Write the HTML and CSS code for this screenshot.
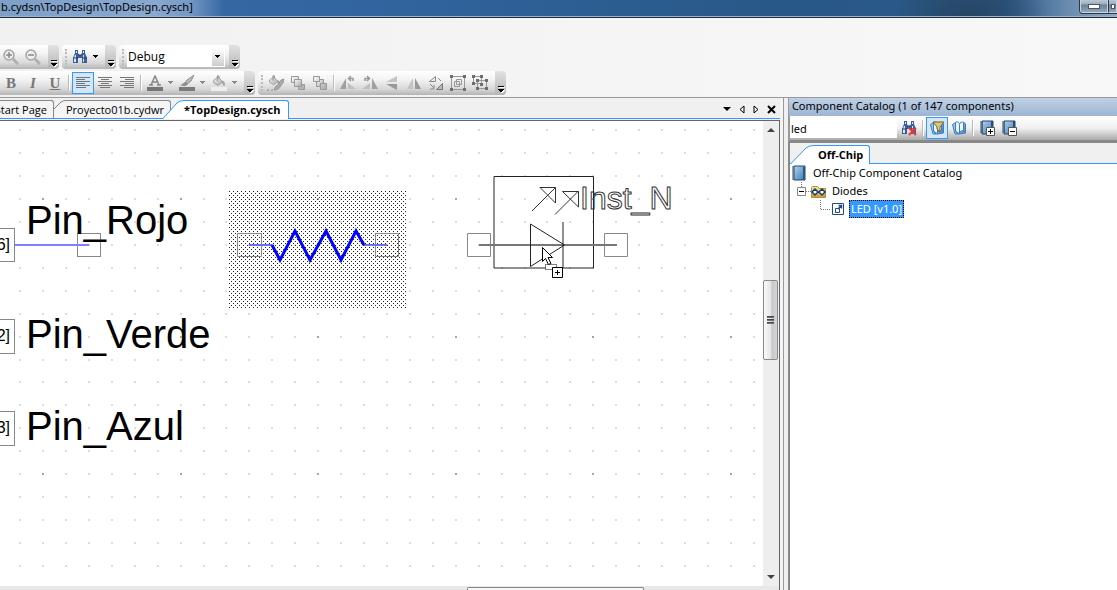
FILE: index.html
```html
<!DOCTYPE html>
<html lang="en">
<head>
<meta charset="utf-8">
<title>TopDesign.cysch</title>
<link rel="stylesheet" href="styles.css">
</head>
<body>
<svg class="defs" aria-hidden="true">
  <defs>
    <linearGradient id="blue" x1="0" y1="0" x2="1" y2="1"><stop offset="0" stop-color="#b5d3ee"/><stop offset="1" stop-color="#3a78b5"/></linearGradient>
    <linearGradient id="grey" x1="0" y1="0" x2="1" y2="1"><stop offset="0" stop-color="#fafafa"/><stop offset="1" stop-color="#a6a6a6"/></linearGradient>
    <linearGradient id="gold" x1="0" y1="0" x2="0" y2="1"><stop offset="0" stop-color="#f7e3a0"/><stop offset="1" stop-color="#c69a35"/></linearGradient>
    <pattern id="dither" x="229" y="191" width="4" height="4" patternUnits="userSpaceOnUse">
      <path d="M0 0h1v1H0zM2 2h1v1H2z" fill="#222" shape-rendering="crispEdges"/>
    </pattern>
    <symbol id="more" viewBox="0 0 8 8"><path d="M2 2h6v1H2zM2 5h6v1H7v1H6v1H4V7H3V6H2z" fill="#fff"/><path d="M1 1h6v1H1zM1 4h6v1H6v1H5v1H3V6H2V5H1z" fill="#000"/></symbol>
    <symbol id="drop" viewBox="0 0 6 4"><path d="M0 0h5v1H4v1H3v1H2V2H1V1H0z"/></symbol>
    <symbol id="binoc" viewBox="0 0 16 16">
      <path d="M3 1h3v3l1 2h2l1-2V1h3v3l2 5v5h-5V9H6v5H1V9l2-5z" fill="#3c5f9c"/>
      <path d="M3 6h1v7H2V9zM11 6h1v7h-1zM4 2h1v2H4zM11 2h1v2h-1z" fill="#dbe8f7"/>
      <path d="M6 6h4M1 9h5M10 9h5" stroke="#203a6c"/>
    </symbol>
    <symbol id="book" viewBox="0 0 16 16"><path d="M1.500 4.500l3-2v9l3 2.500H4z" fill="#9cc4e8" stroke="#3b7fc0"/><path d="M4.500 11V3c1-2 4-1 4 1v10z" fill="#eaf4fc" stroke="#3b7fc0"/><path d="M8.500 14V5l4-3 2 2v9z" fill="url(#blue)" stroke="#3b7fc0"/><path d="M8.500 12V4.500c0-2 3-3 4-2V10z" fill="#f4f9fd" stroke="#3b7fc0"/></symbol>
    <symbol id="notebook" viewBox="0 0 16 16"><path d="M3 1h11v13H3z" fill="url(#blue)" stroke="#23466e"/><path d="M12 1h2v13h-2z" fill="#294e79"/><path d="M1 2h3M1 4h3M1 6h3M1 8h3M1 10h3M1 12h3" stroke="#354b62"/></symbol>
    <symbol id="bucket" viewBox="0 0 16 16"><path d="M2 6l5-4 5 6-5 4-5-3z" fill="url(#grey)" stroke="#969696"/><path d="M6 7V1h2v3M12 7c3 1 2 3 2 5-2-1-2-3-2-5z" fill="#bbb" stroke="#909090"/></symbol>
  </defs>
</svg>

<header class="titlebar">
  <span class="title">b.cydsn\TopDesign\TopDesign.cysch]</span>
  <div class="winbuttons">
    <button class="winbtn" aria-label="Minimize"><span class="mini"></span></button>
    <button class="winbtn next" aria-label="Maximize"><span class="mini"></span></button>
  </div>
</header>

<section class="toolbars">
  <div class="row">
    <div class="bar first">
      <button class="tool" aria-label="Zoom in"><svg width="16" height="16"><circle cx="6" cy="6" r="5" fill="#eee" stroke="#a5a5a5" stroke-width="1.5"/><path d="M3 6h6M6 3v6" stroke="#888" stroke-width="1.5"/><path d="M10 10l5 5" stroke="#b0b0b0" stroke-width="3"/></svg></button>
      <button class="tool" aria-label="Zoom out"><svg width="16" height="16"><circle cx="6" cy="6" r="5" fill="#eee" stroke="#a5a5a5" stroke-width="1.5"/><path d="M3 6h6" stroke="#888" stroke-width="1.5"/><path d="M10 10l5 5" stroke="#b0b0b0" stroke-width="3"/></svg></button>
      <button class="cap" aria-label="More zoom tools"><svg width="8" height="8"><use href="#more"/></svg></button>
    </div>
    <div class="bar">
      <span class="grip"></span>
      <button class="tool" aria-label="Find"><svg width="16" height="16"><use href="#binoc"/></svg></button>
      <button class="arrow" aria-label="Find options"><svg width="6" height="4"><use href="#drop"/></svg></button>
      <button class="cap" aria-label="More find tools"><svg width="8" height="8"><use href="#more"/></svg></button>
    </div>
    <div class="bar">
      <span class="grip"></span>
      <div class="combo">
        <select aria-label="Configuration"><option>Debug</option><option>Release</option></select>
        <span class="combo-arrow"><svg width="6" height="4"><use href="#drop"/></svg></span>
      </div>
      <button class="cap" aria-label="More build tools"><svg width="8" height="8"><use href="#more"/></svg></button>
    </div>
  </div>
  <div class="row">
    <div class="bar first">
      <button class="tool letter"><b>B</b></button>
      <button class="tool letter"><i>I</i></button>
      <button class="tool letter"><u>U</u></button>
      <span class="sep"></span>
      <button class="tool on" aria-label="Align left"><svg width="16" height="14"><path d="M1 1.500h14M1 3.500h9M1 5.500h14M1 7.500h9M1 9.500h14M1 11.500h10" stroke="#6d7680"/></svg></button>
      <button class="tool" aria-label="Align center"><svg width="16" height="14"><path d="M1 1.500h14M4 3.500h8M1 5.500h14M4 7.500h8M1 9.500h14M3 11.500h10" stroke="#777"/></svg></button>
      <button class="tool" aria-label="Align right"><svg width="16" height="14"><path d="M1 1.500h14M6 3.500h9M1 5.500h14M6 7.500h9M1 9.500h14M5 11.500h10" stroke="#777"/></svg></button>
      <span class="sep"></span>
      <button class="tool" aria-label="Text color"><svg width="16" height="16"><path d="M2 10h4M10 10h4M4 10L8 1l4 9M5 7h6" stroke="#888" stroke-width="1.500" fill="none"/><path d="M0 12h16v4H0z" fill="#757575"/></svg></button>
      <button class="arrow dim" aria-label="Text color options"><svg width="6" height="4"><use href="#drop"/></svg></button>
      <button class="tool" aria-label="Line color"><svg width="16" height="16"><path d="M15 0l-3 6-4 3-2-1 2-3z" fill="#bbb" stroke="#8f8f8f"/><path d="M7 7c-3 0-3 3-6 3 3 2 7 1 8-1z" fill="#8d8d8d"/><path d="M0 12h16v4H0z" fill="#7a7a7a"/></svg></button>
      <button class="arrow dim" aria-label="Line color options"><svg width="6" height="4"><use href="#drop"/></svg></button>
      <button class="tool" aria-label="Fill color"><svg width="16" height="16"><path d="M0 12h16v4H0z" fill="#eee"/><use href="#bucket" width="16" height="14"/></svg></button>
      <button class="arrow dim" aria-label="Fill color options"><svg width="6" height="4"><use href="#drop"/></svg></button>
      <button class="cap" aria-label="More format tools"><svg width="8" height="8"><use href="#more"/></svg></button>
    </div>
    <div class="bar">
      <span class="grip"></span>
      <button class="tool" aria-label="Format shape"><svg width="18" height="16"><use href="#bucket" width="15" height="13"/><path d="M7 15c1-3 2-5 4-5l3-5 3-1-1 4-3 4c-1 2-3 3-6 3z" fill="#aaa" stroke="#888" stroke-width=".7"/><path d="M0 15h2M4 15h2" stroke="#888"/></svg></button>
      <button class="tool" aria-label="Bring to front"><svg width="16" height="16"><g fill="url(#grey)" stroke="#999"><path d="M1.500 1.500h7v6h-7zM8.500 9.500h6v5h-6z"/><path d="M4.500 4.500h7v7h-7z"/></g></svg></button>
      <button class="tool" aria-label="Send to back"><svg width="16" height="16"><g fill="url(#grey)" stroke="#999"><path d="M4.500 4.500h7v7h-7z"/><path d="M1.500 1.500h6v5h-6zM8.500 8.500h6v6h-6z"/></g></svg></button>
      <span class="sep"></span>
      <button class="tool" aria-label="Rotate left"><svg width="16" height="16"><path d="M0 14L6 3v11z" fill="#a0a0a0"/><path d="M8 14V8l8 6z" fill="#c0c0c0"/><path d="M13 6V3.500H9M11 1L8.500 3.500 11 6" fill="none" stroke="#999" stroke-width="1.500"/></svg></button>
      <button class="tool" aria-label="Rotate right"><svg width="16" height="16"><path d="M16 14L10 3v11z" fill="#a0a0a0"/><path d="M8 14V8l-8 6z" fill="#c0c0c0"/><path d="M3 6V3.500h4M5 1l2.500 2.500L5 6" fill="none" stroke="#999" stroke-width="1.500"/></svg></button>
      <button class="tool" aria-label="Flip vertical"><svg width="16" height="16"><path d="M2 7L13 1v6z" fill="#c4c4c4"/><path d="M2 9h11v6z" fill="#999"/></svg></button>
      <button class="tool" aria-label="Flip horizontal"><svg width="16" height="16"><path d="M1 14L7 3v11z" fill="#c4c4c4"/><path d="M9 3l6 11H9z" fill="#999"/></svg></button>
      <button class="tool" aria-label="Mirror diagonal"><svg width="16" height="16"><path d="M1.500 6.500l6-5v5z" fill="#eee" stroke="#888"/><path d="M8.500 14.500l6-6v6z" fill="#bbb" stroke="#777"/><path d="M2 9l4 4M6 10v4H2M10 3l3 3" fill="none" stroke="#888"/></svg></button>
      <button class="tool" aria-label="Group"><svg width="16" height="16"><path d="M1.500 1.500h13v13h-13zM4.500 6.500h5v5h-5zM6.500 4.500h5v5h-5z" fill="none" stroke="#999"/><path d="M0 0h3v3H0zM13 0h3v3h-3zM0 13h3v3H0zM13 13h3v3h-3z" fill="#6e6e6e"/></svg></button>
      <button class="tool" aria-label="Ungroup"><svg width="16" height="16"><path d="M1.500 1.500h8v7h-8zM5.500 5.500h9v8h-9z" fill="none" stroke="#999"/><path d="M0 0h3v3H0zM8 0h3v3H8zM0 7h3v3H0zM8 8h3v3H8zM4 4h3v3H4zM13 4h3v3h-3zM4 12h3v3H4zM13 12h3v3h-3z" fill="#6e6e6e"/></svg></button>
      <button class="cap" aria-label="More shape tools"><svg width="8" height="8"><use href="#more"/></svg></button>
    </div>
  </div>
</section>

<main class="work">
  <section class="document">
    <nav class="tabs">
      <button class="tab start"><span class="tab-label">Start Page</span></button>
      <button class="tab"><svg class="slant" width="12" height="18"><path d="M0 18V12L9 2Q11 .5 12 .5V18z" fill="#f5f5f5"/><path d="M0 9L7 2Q9 .5 12 .5" fill="none" stroke="#888"/></svg><span class="tab-label">Proyecto01b.cydwr</span></button>
      <button class="tab current"><svg class="slant" width="21" height="19"><path d="M0 19L14 3Q17 .5 21 .5V19z" fill="#fff"/><path d="M0 18.500L14 3Q17 .5 21 .5" fill="none" stroke="#39f"/></svg><span class="tab-label">*TopDesign.cysch</span></button>
      <div class="tab-tools">
        <button aria-label="Tab list"><svg width="8" height="5"><path d="M0 0h8L4 4z"/></svg></button>
        <button aria-label="Previous tab"><svg width="6" height="9"><path d="M5 1v7L1 4.500z" fill="none" stroke="#000"/></svg></button>
        <button aria-label="Next tab"><svg width="6" height="9"><path d="M1 1v7l4-3.500z" fill="none" stroke="#000"/></svg></button>
        <button aria-label="Close tab"><svg width="9" height="9"><path d="M1 1l7 7M8 1L1 8" stroke="#000" stroke-width="2"/></svg></button>
      </div>
    </nav>
    <div class="canvas-area">
      <svg class="canvas" role="img" aria-label="Schematic">
        <g transform="translate(0 -121)">
          <g id="dots" shape-rendering="crispEdges"></g>
          <g fill="none" stroke="#888"><rect x="-30.500" y="228.500" width="45" height="33"/><rect x="-30.500" y="319.500" width="45" height="34"/><rect x="-30.500" y="411.500" width="45" height="34"/><rect x="77.500" y="233.500" width="23" height="23"/></g>
          <g class="port"><text x="10" y="250" text-anchor="end">6]</text><text x="10" y="341" text-anchor="end">2]</text><text x="10" y="433" text-anchor="end">3]</text></g>
          <path d="M15 245h74" stroke="#8080ff" stroke-width="2"/>
          <g class="pin"><text x="26" y="234">Pin_Rojo</text><text x="26" y="348">Pin_Verde</text><text x="26" y="440">Pin_Azul</text></g>
          <rect x="229" y="191" width="178" height="117" fill="url(#dither)"/>
          <path d="M237.500 233.500h24v23h-24zM375.500 233.500h23v23h-23z" fill="none" stroke="#888"/>
          <path d="M249 245h23M364 245h23" stroke="#6e6ef5" stroke-width="2"/>
          <path d="M272 245l8 15 15-29 15 29 16-29 15 29 15-29 8 14" fill="none" stroke="#00f" stroke-width="3"/>
          <path d="M494 176.500h99.500v91.500H494z" fill="none" stroke="#222"/>
          <path d="M467.500 233.500h23v23h-23zM604.500 233.500h23v23h-23z" fill="none" stroke="#888"/>
          <path d="M479 245h138" stroke="#777" stroke-width="2"/>
          <path d="M530.500 224v42.500L564.500 245zM563 222v46" fill="none" stroke="#222"/>
          <path d="M532 211l23.500-23.500M540 187.500h15.500V203zM555 214.500l23.500-23.500M562.500 191.500h16V207z" fill="none" stroke="#333"/>
          <text class="instance" x="580" y="209">Inst_N</text>
          <path d="M545.500 264.500h11v5h-11z" fill="#fff" stroke="#000" stroke-dasharray="1 1"/>
          <path d="M542.500 247.500v14l3-3 3 6 2.500-1-3-6h4.500z" fill="#fff" stroke="#000"/>
          <path d="M552.500 267.500h10v10h-10z" fill="#fff" stroke="#000"/><path d="M555 272.500h5M557.500 270v5" stroke="#000"/>
        </g>
      </svg>
      <div class="vscroll">
        <svg width="8" height="5"><path d="M0 5h8L4 1z" fill="#444"/></svg>
        <div class="vtrack"><div class="vthumb"><span></span><span></span><span></span></div></div>
        <svg width="8" height="5"><path d="M0 0h8L4 4z" fill="#444"/></svg>
      </div>
    </div>
    <div class="hscroll"><div class="hthumb"></div></div>
  </section>

  <aside class="catalog">
    <h2>Component Catalog (1 of 147 components)</h2>
    <div class="catalog-tools">
      <input type="text" value="led" aria-label="Search components">
      <button class="tool" aria-label="Clear search"><svg width="16" height="16"><use href="#binoc"/><path d="M8 8l7 7M15 8l-7 7" stroke="#e33" stroke-width="2"/></svg></button>
      <span class="sep"></span>
      <button class="tool on" aria-label="Filter catalog"><svg width="16" height="16"><use href="#book"/><path d="M4 2h11l-4 5v5l-3-3V7z" fill="#d9c979" stroke="#77642a"/></svg></button>
      <button class="tool" aria-label="Open catalog"><svg width="16" height="16"><use href="#book"/></svg></button>
      <span class="sep"></span>
      <button class="tool" aria-label="Expand all"><svg width="16" height="16"><use href="#notebook"/><path d="M7.500 7.500h8v8h-8z" fill="#fff" stroke="#555"/><path d="M9 11.500h5M11.500 9v5" stroke="#000"/></svg></button>
      <button class="tool" aria-label="Collapse all"><svg width="16" height="16"><use href="#notebook"/><path d="M7.500 7.500h8v8h-8z" fill="#fff" stroke="#555"/><path d="M9 11.500h5" stroke="#000"/></svg></button>
    </div>
    <div class="catalog-body">
      <nav class="catalog-tabs"><button class="tab current"><svg class="slant" width="23" height="19"><path d="M0 19L15 3Q18 .5 23 .5V19z" fill="#fff"/><path d="M0 18.500L15 3Q18 .5 23 .5" fill="none" stroke="#39f"/></svg><span class="tab-label">Off-Chip</span></button></nav>
      <ul class="tree">
        <li><svg width="16" height="16"><path d="M3 1h11v14H3z" fill="url(#blue)" stroke="#23466e"/><path d="M12 2h2v13h-2z" fill="#31577f"/><path d="M1 2h2M1 4h2M1 6h2M1 8h2M1 10h2M1 12h2M1 14h2" stroke="#354b62"/></svg><span>Off-Chip Component Catalog</span></li>
        <li class="level1"><svg width="30" height="18"><path d="M4.500 0v5M9 9.500h5" stroke="#777" stroke-dasharray="1 1"/><path d="M.5 5.500h8v8h-8z" fill="#fff" stroke="#888"/><path d="M2 9.500h5" stroke="#000"/><path d="M14.500 15.500v-10l1-1h5l2 2h6v9z" fill="url(#gold)" stroke="#b68c31"/><path d="M15 10l3-3 3 3-3 3zM22 10l3-3 3 3-3 3z" fill="#fff" stroke="#193d73" stroke-width="1.500"/></svg><span>Diodes</span></li>
        <li class="level2"><svg width="25" height="18"><path d="M.5 0v9.500H11" fill="none" stroke="#777" stroke-dasharray="1 1"/><path d="M12.500 3.500h11v11h-11z" fill="#fff" stroke="#234b85"/><path d="M15.500 8.500h4v4h-4z" fill="none" stroke="#234b85"/><path d="M18 9l4-4M18.500 5.500h3v3" fill="none" stroke="#234b85" stroke-width="1.500"/></svg><span class="selected">LED [v1.0]</span></li>
      </ul>
    </div>
  </aside>
</main>
<script src="grid.js"></script>
</body>
</html>
```

FILE: styles.css
```css
* { box-sizing: border-box; }
body { margin: 0; height: 100vh; display: flex; flex-direction: column; overflow: hidden; background: #f4f4f4; color: #000; font-family: "Open Sans", "Noto Sans", sans-serif; font-size: 11px; line-height: 16px; }
button { font: inherit; color: inherit; background: none; border: 0; padding: 0; display: flex; align-items: center; justify-content: center; }
svg { display: block; flex: none; }
.defs { position: absolute; width: 0; height: 0; }

.titlebar { flex: none; height: 18px; display: flex; justify-content: space-between; border-bottom: 1px solid #202c3b; box-shadow: inset 0 -1px #9db3c9; font-family: "Noto Sans", sans-serif; background: radial-gradient(circle at 970px 26px, #26435f 0, transparent 80px), linear-gradient(90deg, #7d9fc8 0, #88a8cf 14%, #7598c5 17%, #3568a3 20%, #3266a1 30%, #285887 70%, #2b5a8a 90%, #6d8eb0 96%, #91a9c2 100%); }
.title { line-height: 14px; padding-left: 1px; white-space: nowrap; }
.winbuttons { display: flex; height: 14px; border: 1px solid #2b3848; border-top: 0; border-right: 0; border-radius: 0 0 0 4px; overflow: hidden; }
.winbtn { width: 28px; align-items: flex-start; padding-top: 4px; background: linear-gradient(#bac8d5 0, #9aabbc 35%, #6b7f94 40%, #94a7b8 100%); border: 1px solid #c8d5e1; border-top: 0; }
.winbtn.next { width: 9px; border-left-color: #2b3848; }
.mini { width: 12px; height: 5px; background: #fff; border: 1px solid #4b5563; }
.next .mini { width: 4px; }

.toolbars { flex: none; padding-top: 27px; display: flex; flex-direction: column; gap: 1px; height: 79px; background: linear-gradient(90deg, #f1f1f1, #f8f8f8); }
.row { display: flex; gap: 3px; height: 25px; }
.bar { display: flex; align-items: center; height: 24px; border-radius: 4px; background: linear-gradient(#fff 0, #f3f3f3 35%, #d8d8d8 75%, #b4b4b4 100%); }
.bar.first { border-radius: 0 4px 4px 0; }
.tool { width: 22px; height: 22px; flex: none; }
.tool.on { border: 1px solid #39f; background: #d4e6f8; }
.letter { font-family: "Liberation Serif", serif; font-size: 15px; font-weight: bold; color: #777; }
.grip { width: 4px; height: 16px; margin-left: 3px; border-left: 2px dotted #bbb; }
.arrow { width: 10px; height: 22px; }
.arrow.dim { fill: #888; }
.sep { width: 6px; height: 16px; flex: none; background: linear-gradient(90deg, transparent 2px, #bbb 2px, #bbb 3px, #fff 3px, #fff 4px, transparent 4px); }
.cap { width: 11px; height: 24px; align-items: flex-end; padding-bottom: 2px; margin-left: 4px; border-radius: 0 4px 4px 0; background: linear-gradient(#e2e2e2, #b4b4b4); }
.combo { position: relative; margin-left: 1px; width: 98px; height: 20px; background: #fff; }
.combo select { appearance: none; width: 100%; height: 20px; border: 0; padding: 0 20px 0 1px; background: #fff; font: inherit; font-size: 12px; }
.combo-arrow { position: absolute; right: 1px; top: 1px; width: 12px; height: 18px; display: flex; align-items: center; justify-content: center; background: linear-gradient(#fff, #ccc); pointer-events: none; }

.work { flex: 1; min-height: 0; display: flex; border-top: 1px solid #999; }
.document { flex: 1; min-width: 0; display: flex; flex-direction: column; margin-right: 3px; background: #f0f0f0; }
.tabs { flex: none; display: flex; height: 21px; padding-top: 2px; border-bottom: 1px solid #39f; background: #f0f0f0; }
.tab { height: 18px; align-items: stretch; white-space: nowrap; }
.tab-label { border-top: 1px solid #888; border-right: 1px solid #888; border-radius: 0 3px 0 0; padding: 0 6px 0 0; line-height: 18px; background: #f5f5f5; }
.tab.start { width: 54px; justify-content: flex-end; overflow: hidden; }
.tab.current { height: 19px; margin-left: -8px; position: relative; }
.tab.current .tab-label { background: #fff; border-color: #39f; font-weight: bold; }
.tabs .tab.current .tab-label { padding-right: 8px; }
.tab-tools { margin-left: auto; display: flex; gap: 8px; padding-right: 4px; height: 19px; }
.canvas-area { flex: 1; min-height: 0; margin-top: 1px; display: flex; border-top: 1px solid #666; border-right: 1px solid #666; background: #fff; }
.canvas { flex: 1; min-width: 0; height: 100%; background: #fff; }
.pin { font: 40px "Liberation Sans", sans-serif; }
.port { font: 16px "Liberation Sans", sans-serif; }
.instance { font: 32px "Liberation Sans", sans-serif; fill: none; stroke: #333; stroke-width: 1; }
.vscroll { width: 16px; display: flex; flex-direction: column; align-items: center; padding: 6px 0; background: #eee; }
.vtrack { flex: 1; width: 100%; padding-top: 148px; }
.vthumb { width: 15px; height: 80px; border: 1px solid #888; border-radius: 2px; background: linear-gradient(90deg, #fafafa, #e5e5e7 50%, #c7c7cd 60%, #d5d5d9); display: flex; flex-direction: column; gap: 1px; align-items: center; justify-content: center; }
.vthumb span { width: 7px; height: 2px; background: linear-gradient(#333, #888); }
.hscroll { flex: none; height: 4px; border-right: 1px solid #666; background: #e8e8e8; padding-top: 1px; }
.hthumb { margin-left: 60%; width: 177px; height: 3px; border: 1px solid #888; border-bottom: 0; border-radius: 2px 2px 0 0; background: #f7f7f7; }

.catalog { flex: none; width: calc(30% - 1px); border-left: 1px solid #999; padding-left: 4px; display: flex; flex-direction: column; background: #f0f0f0; font-family: "Noto Sans", sans-serif; }
.catalog h2 { margin: 0; height: 18px; padding-left: 3px; border-left: 1px solid #999; font-size: 11px; font-weight: normal; line-height: 16px; background: linear-gradient(#bfd0e4, #9cb5d3); white-space: nowrap; }
.catalog-tools { height: 27px; border-left: 2px solid #999; border-bottom: 3px solid #888; display: flex; align-items: center; background: linear-gradient(#fff 0, #f0f0f0 50%, #aaa 100%); }
.catalog-tools input { width: 107px; height: 20px; border: 0; padding: 0 1px; margin-right: 1px; font: inherit; background: #fff; }
.catalog-body { flex: 1; border-left: 2px solid #888; background: #fff; }
.catalog-tabs { display: flex; height: 21px; padding-top: 2px; padding-left: 9px; background: #f0f0f0; border-bottom: 1px solid #39f; }
.catalog-tabs .tab-label { padding-left: 4px; font-family: "Open Sans", sans-serif; }
.tree { margin: 0; padding: 0 0 0 1px; list-style: none; }
.tree li { display: flex; align-items: center; height: 18px; gap: 6px; }
.tree .level1 { padding-left: 6px; gap: 5px; }
.tree .level2 { padding-left: 29px; gap: 4px; }
.selected { background: #39f; color: #fff; outline: 1px dotted #000; outline-offset: -1px; padding: 1px 2px; }
```

FILE: grid.js
```
const pitch = 22.93;
const dots = document.getElementById("dots");
let light = "";
let dark = "";
for (let row = -3; row < 60; row++) {
  for (let col = -1; col < 110; col++) {
    const mark = `M${Math.round(42 + col * pitch)} ${Math.round(198 + row * pitch)}h2v2h-2z`;
    if (row % 6 === 0 && col % 6 === 0) dark += mark;
    else light += mark;
  }
}
dots.innerHTML = `<path d="${light}" fill="#dcdcdc"/><path d="${dark}" fill="#a5a5a5"/>`;
```
